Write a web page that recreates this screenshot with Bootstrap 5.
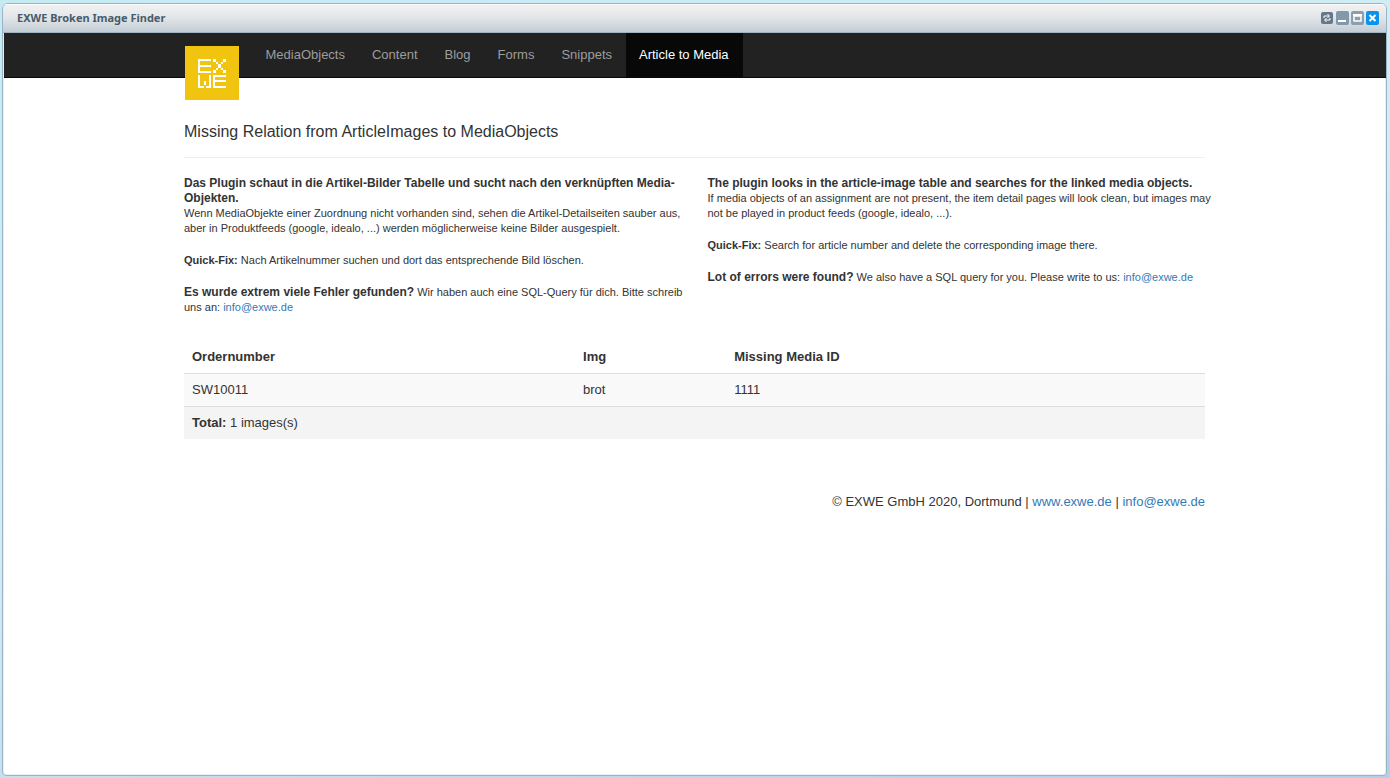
<!DOCTYPE html>
<html lang="de">
<head>
<meta charset="utf-8">
<meta name="viewport" content="width=device-width, initial-scale=1">
<title>EXWE Broken Image Finder</title>
<link href="https://cdn.jsdelivr.net/npm/bootstrap@5.3.0/dist/css/bootstrap.min.css" rel="stylesheet">
<style>
body{font-family:"Liberation Sans",Arial,sans-serif;font-size:13px;line-height:18px;color:#333;background:linear-gradient(165deg,#c6eaf4 0%,#d4edf5 45%,#b4cdea 100%);padding:3px 3px 2px 2px}
a{color:#337ab7;text-decoration:none}
a:hover{text-decoration:underline}
.app-window{border:1px solid #99b4c4;border-radius:6px 6px 4px 4px;background:#fff;box-shadow:inset 0 0 0 1px #e8eff3;overflow:hidden}
.window-bar{height:29px;padding:0 6px 0 14px;background:linear-gradient(#f2f2f2,#e2e5e8 50%,#c2cdd5);border-bottom:1px solid #9fb3c1;box-shadow:inset 0 1px #fafafa}
.window-title{font:bold 11px/18px "Noto Sans","Open Sans",sans-serif;color:#475c6a;margin:0}
.tool{width:15px;height:14px;padding:0;border:0;background:none;display:block}
.tool svg{display:block}
.app-nav{background:#222;border-bottom:1px solid #080808;height:45px;margin-left:1px}
.page-box{max-width:1047px;padding:0 13px}
.app-nav .nav-link{color:#9d9d9d;padding:13px 14px 13px 13px;line-height:18px}
.app-nav .nav-link:hover{color:#fff}
.app-nav .nav-link.active{color:#fff;background:#080808}
.logo{width:54px;height:54px;margin:13px 14px 0 0;position:relative;z-index:1}
.page-title{font-size:16px;line-height:18px;margin:45px 0 16px}
.rule{border-top:1px solid #eee;opacity:1;margin:0 0 18px}
.info{--bs-gutter-x:26px;font-size:11px;line-height:15px}
.info p{margin-bottom:17px}
.lead-in{font-size:12px}
.result{--bs-table-striped-bg:#f9f9f9;--bs-table-striped-color:#333;--bs-table-color:#333;border-color:#ddd;margin:9px 0 54px}
.result>:not(caption)>*>*{padding:7px 8px;border-bottom-width:0}
.result>thead>tr>th{border-bottom-width:1px}
.result>tfoot>tr>td{border-top-width:1px;background:#f4f4f4}
.col-number{width:38.3%}
.col-img{width:14.8%}
</style>
</head>
<body class="d-flex flex-column min-vh-100">
<div class="app-window d-flex flex-column flex-grow-1">
  <header class="window-bar d-flex align-items-center justify-content-between">
    <h1 class="window-title">EXWE Broken Image Finder</h1>
    <div class="d-flex">
      <button class="tool" type="button" aria-label="Reload"><svg width="14" height="14"><rect x="1" y="1" width="12" height="12" rx="2" fill="#657889"/><path d="M4 7V5h5M7.500 3l2 2-2 2M10 7v2H5M6.500 7l-2 2 2 2" fill="none" stroke="#fff"/></svg></button>
      <button class="tool" type="button" aria-label="Minimize"><svg width="14" height="14"><rect x="1" y="0" width="13" height="14" rx="2" fill="#8299ab"/><rect x="3" y="9" width="8" height="2" fill="#fff"/></svg></button>
      <button class="tool" type="button" aria-label="Maximize"><svg width="14" height="14"><rect x="1" y="0" width="13" height="14" rx="2" fill="#8c9fae"/><path d="M4 5h7v5H4z" fill="none" stroke="#fff" stroke-width="1.500"/><path d="M3 4h9" stroke="#fff" stroke-width="2"/></svg></button>
      <button class="tool" type="button" aria-label="Close"><svg width="14" height="14"><rect x="1" y="0" width="13" height="14" rx="2" fill="#0b93ec"/><path d="M4.500 4l6 6M10.500 4l-6 6" stroke="#fff" stroke-width="2"/></svg></button>
    </div>
  </header>
  <nav class="app-nav">
    <div class="page-box container-fluid mx-auto d-flex align-items-start">
      <a class="logo flex-shrink-0" href="#" aria-label="EXWE"><svg class="d-block" width="54" height="54" viewBox="0 0 54 54"><rect width="54" height="54" fill="#f1c40f"/>
        <g fill="none" stroke="#fff" stroke-width="2">
          <path d="M14 13v14M13 14h13M13 20h13M13 26h13"/>
          <path d="M29 30h12M29 35h12M29 41h12M29 29v13"/>
          <path d="M14 29v13M25 29v13M13 41h6M20 35v4M21 41h5"/>
        </g>
        <g fill="#fff"><path d="M28 13h3v3h-3zM38 13h3v3h-3zM31 16h2v2h-2zM36 16h2v2h-2zM33 18h3v4h-3zM31 22h2v2h-2zM36 22h2v2h-2zM28 24h3v3h-3zM38 24h3v3h-3z"/></g>
      </svg></a>
      <ul class="nav flex-nowrap">
        <li class="nav-item"><a class="nav-link" href="#">MediaObjects</a></li>
        <li class="nav-item"><a class="nav-link" href="#">Content</a></li>
        <li class="nav-item"><a class="nav-link" href="#">Blog</a></li>
        <li class="nav-item"><a class="nav-link" href="#">Forms</a></li>
        <li class="nav-item"><a class="nav-link" href="#">Snippets</a></li>
        <li class="nav-item"><a class="nav-link active" aria-current="page" href="#">Article to Media</a></li>
      </ul>
    </div>
  </nav>
  <main class="page-box container-fluid mx-auto">
    <h2 class="page-title fw-normal">Missing Relation from ArticleImages to MediaObjects</h2>
    <hr class="rule">
    <div class="row info">
      <div class="col-6 pe-0">
        <p><strong class="lead-in">Das Plugin schaut in die Artikel-Bilder Tabelle und sucht nach den verknüpften Media-Objekten.</strong><br>Wenn MediaObjekte einer Zuordnung nicht vorhanden sind, sehen die Artikel-Detailseiten sauber aus, aber in Produktfeeds (google, idealo, ...) werden möglicherweise keine Bilder ausgespielt.</p>
        <p><strong>Quick-Fix:</strong> Nach Artikelnummer suchen und dort das entsprechende Bild löschen.</p>
        <p><strong class="lead-in">Es wurde extrem viele Fehler gefunden?</strong> Wir haben auch eine SQL-Query für dich. Bitte schreib uns an: <a href="#">info@exwe.de</a></p>
      </div>
      <div class="col-6 pe-0" lang="en">
        <p><strong class="lead-in">The plugin looks in the article-image table and searches for the linked media objects.</strong><br>If media objects of an assignment are not present, the item detail pages will look clean, but images may not be played in product feeds (google, idealo, ...).</p>
        <p><strong>Quick-Fix:</strong> Search for article number and delete the corresponding image there.</p>
        <p><strong class="lead-in">Lot of errors were found?</strong> We also have a SQL query for you. Please write to us: <a href="#">info@exwe.de</a></p>
      </div>
    </div>
    <table class="table table-striped result">
      <thead><tr><th class="col-number" scope="col">Ordernumber</th><th class="col-img" scope="col">Img</th><th scope="col">Missing Media ID</th></tr></thead>
      <tbody><tr><td>SW10011</td><td>brot</td><td>1111</td></tr></tbody>
      <tfoot><tr><td colspan="3"><strong>Total:</strong> 1 images(s)</td></tr></tfoot>
    </table>
    <footer class="text-end">© EXWE GmbH 2020, Dortmund | <a href="#">www.exwe.de</a> | <a href="#">info@exwe.de</a></footer>
  </main>
</div>
</body>
</html>
